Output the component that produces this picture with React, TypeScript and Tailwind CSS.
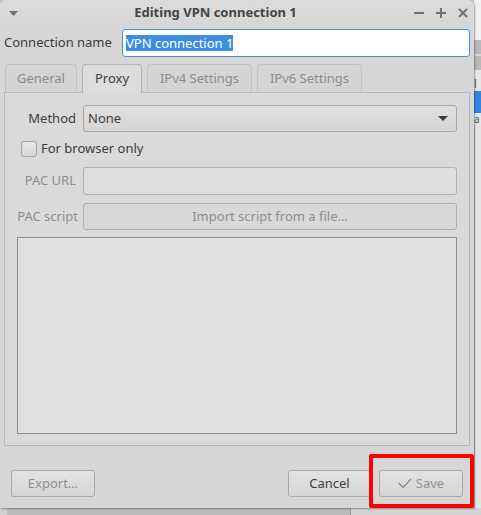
import React from "react";

const font = { fontFamily: '"Noto Sans", "Open Sans", sans-serif' };

const Tab: React.FC<{ label: string; active?: boolean; width: string }> = ({ label, active, width }) =>
  active ? (
    <div className={`${width} h-[29px] -mb-px z-10 flex items-center justify-center rounded-t-[4px] border border-b-0 border-[#b4b4b4] bg-[#dcdcdc] text-[13px] text-[#3c3c3c]`}>
      {label}
    </div>
  ) : (
    <div className={`${width} h-[28px] flex items-center justify-center rounded-t-[4px] border border-b-0 border-[#c2c2c2] bg-[#d4d4d4] text-[13px] text-[#8c8c8c]`}>
      {label}
    </div>
  );

const Button: React.FC<{ label: React.ReactNode; disabled?: boolean; width: string }> = ({ label, disabled, width }) => (
  <button
    className={`${width} h-[27px] flex items-center justify-center gap-1 rounded-[3px] border border-[#a8a8a8] bg-gradient-to-b from-[#e2e2e2] to-[#d6d6d6] text-[13px] ${
      disabled ? "text-[#8e8e8e]" : "text-[#3c3c3c]"
    }`}
  >
    {label}
  </button>
);

export default function App() {
  return (
    <div className="w-[481px] h-[515px] flex flex-col overflow-hidden bg-[#c6c6c6]" style={font}>
      <div className="flex h-[508px]">
        {/* dialog */}
        <div className="relative w-[474px] h-[508px] flex flex-col rounded-t-[6px] bg-[#d6d6d6] shadow-[1px_1px_2px_rgba(0,0,0,0.35)]">
          {/* title bar */}
          <div className="h-[26px] flex items-center rounded-t-[6px] bg-gradient-to-b from-[#dcdcdc] to-[#d6d6d6]">
            <div className="w-[26px] flex justify-center">
              <svg width="9" height="5" viewBox="0 0 9 5">
                <path d="M0 0 H9 L4.5 5 Z" fill="#6e6e6e" />
              </svg>
            </div>
            <div className="flex-1 text-center text-[13px] font-bold text-[#454545]">Editing VPN connection 1</div>
            <div className="w-[69px] flex items-center gap-[12px] pl-[9px]">
              <svg width="10" height="10" viewBox="0 0 10 10">
                <path d="M0 5 H10" stroke="#707070" strokeWidth="2" />
              </svg>
              <svg width="10" height="10" viewBox="0 0 10 10">
                <path d="M0 5 H10 M5 0 V10" stroke="#707070" strokeWidth="2" />
              </svg>
              <svg width="10" height="10" viewBox="0 0 10 10">
                <path d="M1 1 L9 9 M9 1 L1 9" stroke="#707070" strokeWidth="2" />
              </svg>
            </div>
          </div>

          {/* connection name */}
          <div className="mt-[3px] flex items-center pl-[4px] pr-[4px]">
            <span className="w-[118px] text-[13px] text-[#3c3c3c]">Connection name</span>
            <div className="flex-1 h-[28px] flex items-center rounded-[3px] border border-[#4a90d9] bg-white px-[3px]">
              <span className="bg-[#3d8ee0] text-[13px] leading-[16px] text-white">VPN connection 1</span>
            </div>
          </div>

          {/* tabs */}
          <div className="mt-[7px] flex items-end gap-[5px] pl-[5px]">
            <Tab label="General" width="w-[72px]" />
            <Tab label="Proxy" active width="w-[60px]" />
            <Tab label="IPv4 Settings" width="w-[105px]" />
            <Tab label="IPv6 Settings" width="w-[105px]" />
          </div>

          {/* panel */}
          <div className="mx-[4px] h-[354px] flex flex-col gap-0 border border-[#b8b8b8] bg-[#dadada] px-[12px] pt-[12px] pb-[11px]">
            <div className="flex items-center">
              <span className="w-[66px] pr-[7px] text-right text-[13px] text-[#3c3c3c]">Method</span>
              <div className="flex-1 h-[27px] flex items-center justify-between rounded-[3px] border border-[#a8a8a8] bg-gradient-to-b from-[#e0e0e0] to-[#d6d6d6] pl-[4px] pr-[8px]">
                <span className="text-[13px] text-[#3c3c3c]">None</span>
                <svg width="10" height="5" viewBox="0 0 10 5">
                  <path d="M0 0 H10 L5 5 Z" fill="#3c3c3c" />
                </svg>
              </div>
            </div>

            <div className="mt-[8px] h-[17px] flex items-center pl-[4px]">
              <div className="w-[16px] h-[16px] rounded-[3px] border border-[#a4a4a4] bg-gradient-to-b from-[#e6e6e6] to-[#d8d8d8]" />
              <span className="ml-[4px] text-[13px] text-[#3c3c3c]">For browser only</span>
            </div>

            <div className="mt-[10px] flex items-center">
              <span className="w-[66px] pr-[7px] text-right text-[13px] text-[#8e8e8e]">PAC URL</span>
              <div className="flex-1 h-[28px] rounded-[3px] border border-[#b0b0b0] bg-[#dedede]" />
            </div>

            <div className="mt-[8px] flex items-center">
              <span className="w-[66px] pr-[5px] text-right text-[13px] whitespace-nowrap text-[#8e8e8e]">PAC script</span>
              <div className="flex-1 h-[27px] flex items-center justify-center rounded-[3px] border border-[#b0b0b0] bg-[#d8d8d8] text-[13px] text-[#8e8e8e]">
                Import script from a file…
              </div>
            </div>

            <div className="mt-[7px] h-[197px] border border-[#8c8c8c] bg-[#e0e0e0]" />
          </div>

          {/* buttons */}
          <div className="mt-[24px] flex items-center px-[11px]">
            <Button label="Export…" disabled width="w-[84px]" />
            <div className="flex-1" />
            <Button label="Cancel" width="w-[83px]" />
            <div className="w-[8px]" />
            <Button
              disabled
              width="w-[84px]"
              label={
                <>
                  <svg width="14" height="11" viewBox="0 0 14 11">
                    <path d="M1 5 L5 9.5 L13 1" stroke="#8e8e8e" strokeWidth="1.4" fill="none" />
                  </svg>
                  Save
                </>
              }
            />
          </div>

          {/* highlight annotation */}
          <div className="absolute left-[369px] top-[454px] w-[105px] h-[54px] border-[4px] border-[#ff0000] rounded-[2px]" />
        </div>

        {/* background window sliver */}
        <div className="w-[7px] flex flex-col bg-[#d8d8d8]">
          <div className="h-[40px] bg-[#f2f2f2]" />
          <div className="h-[14px] bg-[#b9b9b9]" />
          <div className="h-[2px]" />
          <div className="h-[14px] bg-[#b9b9b9]" />
          <div className="h-[8px] bg-[#e6e6e6]" />
          <div className="h-[10px] bg-[#e6e6e6] text-[10px] leading-[10px] text-[#6a4a2a]">J</div>
          <div className="h-[3px] bg-[#e6e6e6]" />
          <div className="h-[22px] bg-[#3584e4]" />
          <div className="h-[12px] bg-[#e6e6e6] text-[10px] leading-[12px] text-[#555]">a</div>
          <div className="flex-1 border-l border-[#bdbdbd] bg-[#e4e4e4]" />
        </div>
      </div>
      <div className="h-[7px] flex">
        <div className="w-[7px] bg-[#d0d0d0]" />
        <div className="w-[343px] bg-[#bcbcbc]" />
        <div className="flex-1 border-l border-[#9a9a9a] bg-[#d4d4d4]" />
      </div>
    </div>
  );
}
